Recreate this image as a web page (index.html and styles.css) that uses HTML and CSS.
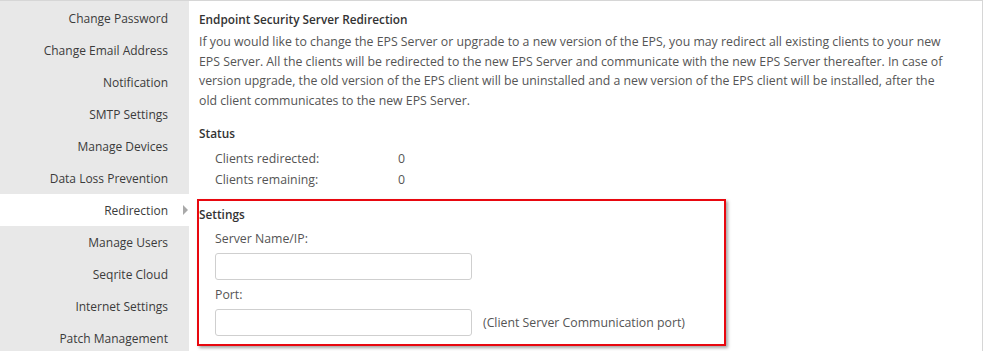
FILE: index.html
```html
<!DOCTYPE html>
<html lang="en">
<head>
    <meta charset="UTF-8">
    <title>Redirection</title>
    <link rel="stylesheet" href="styles.css">
</head>
<body>
    <div class="container">
        <div class="sidebar">
            <ul class="nav-links">
                <li class="nav-item"><a href="#">Change Password</a></li>
                <li class="nav-item"><a href="#">Change Email Address</a></li>
                <li class="nav-item"><a href="#">Notification</a></li>
                <li class="nav-item"><a href="#">SMTP Settings</a></li>
                <li class="nav-item"><a href="#">Manage Devices</a></li>
                <li class="nav-item"><a href="#">Data Loss Prevention</a></li>
                <li class="nav-item active"><a href="#">Redirection</a></li>
                <li class="nav-item"><a href="#">Manage Users</a></li>
                <li class="nav-item"><a href="#">Seqrite Cloud</a></li>
                <li class="nav-item"><a href="#">Internet Settings</a></li>
                <li class="nav-item"><a href="#">Patch Management</a></li>
            </ul>
        </div>

        <div class="main-content">
            <h3>Endpoint Security Server Redirection</h3>
            <p class="intro">If you would like to change the EPS Server or upgrade to a new version of the EPS, you may redirect all existing clients to your new EPS Server. All the clients will be redirected to the new EPS Server and communicate with the new EPS Server thereafter. In case of version upgrade, the old version of the EPS client will be uninstalled and a new version of the EPS client will be installed, after the old client communicates to the new EPS Server.</p>

            <h3 class="status-title">Status</h3>
            <div class="status-row"><span class="status-label">Clients redirected:</span><span>0</span></div>
            <div class="status-row"><span class="status-label">Clients remaining:</span><span>0</span></div>

            <div class="settings">
                <h3>Settings</h3>
                <label class="field-label">Server Name/IP:</label>
                <div class="field"><input type="text"></div>
                <label class="field-label">Port:</label>
                <div class="field"><input type="text"><span class="hint">(Client Server Communication port)</span></div>
            </div>
        </div>
    </div>
</body>
</html>
```

FILE: styles.css
```css
body {
    font-family: "Open Sans", Arial, sans-serif;
    font-size: 12px;
    color: #555;
    margin: 0;
    padding: 0;
    background: #fff;
}
.container {
    display: flex;
    width: 983px;
    height: 351px;
    border-top: 1px solid #d6d6d6;
    box-sizing: border-box;
    overflow: hidden;
}
.sidebar {
    width: 189px;
    flex: none;
    background: #e8e8e8;
    padding-top: 1px;
}
.nav-links {
    margin: 0;
    padding: 0;
}
.nav-item {
    list-style: none;
    position: relative;
}
.nav-item a {
    display: block;
    height: 32px;
    line-height: 33px;
    padding-right: 21px;
    text-align: right;
    text-decoration: none;
    color: #3b3b3b;
}
.nav-item.active a {
    background: #fff;
}
.nav-item.active a::after {
    content: "";
    position: absolute;
    right: 1px;
    top: 11px;
    border-left: 5px solid #a9a9a9;
    border-top: 5px solid transparent;
    border-bottom: 5px solid transparent;
}
.main-content {
    flex: 1;
    border-right: 1px solid #d6d6d6;
    padding: 8px 0 0 10px;
    font-size: 12.3px;
}
h3 {
    margin: 0;
    font-size: 11.8px;
    font-weight: 600;
    color: #333;
    line-height: 20px;
}
.intro {
    margin: 3px 0 0;
    width: 752px;
    line-height: 19.7px;
}
.status-title {
    margin-top: 12px;
}
.status-row {
    display: flex;
    padding-left: 16px;
    line-height: 21px;
}
.status-row:first-of-type {
    margin-top: 5px;
}
.status-label {
    width: 183px;
}
.settings {
    margin: 9px 0 0 -2px;
    width: 525px;
    height: 140px;
    border: 2px solid #e8080f;
    box-shadow: 2px 2px 3px rgba(0, 0, 0, 0.35);
    padding: 3px 0 0 0;
}
.field-label {
    display: block;
    padding-left: 16px;
    margin-top: 5px;
    line-height: 20px;
}
.field {
    display: flex;
    align-items: center;
    padding-left: 16px;
    margin-top: 4px;
}
.field input {
    width: 257px;
    height: 27px;
    box-sizing: border-box;
    border: 1px solid #cfcfcf;
    border-radius: 3px;
    margin: 0;
}
.hint {
    margin-left: 11px;
}
```
